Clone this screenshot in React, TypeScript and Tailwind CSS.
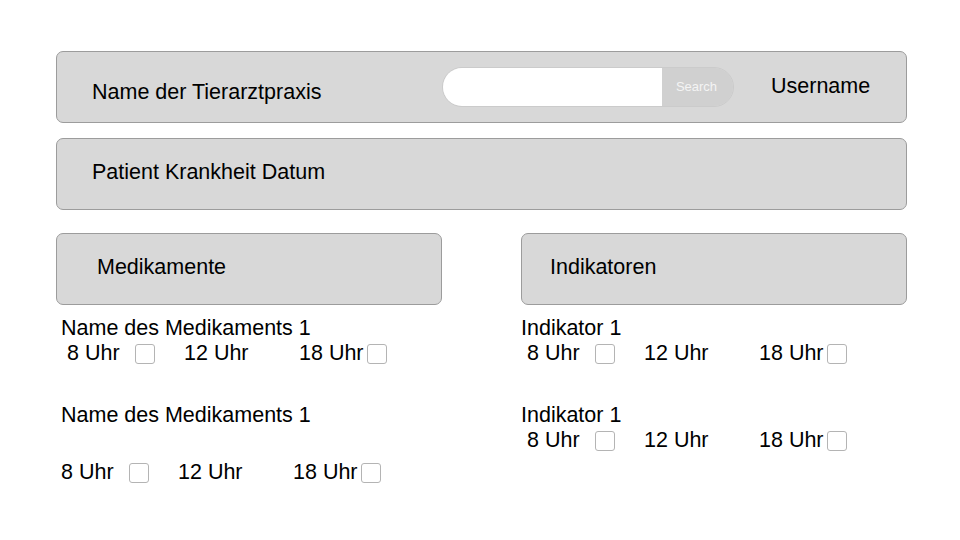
import React from "react";

const Box = () => (
  <span className="inline-block w-[20px] h-[20px] shrink-0 bg-white border border-[#b4b4b4] rounded-[3px]" />
);

const TimeRow = ({ pad }: { pad: boolean }) => (
  <div className={`flex items-center h-[25px] ${pad ? "pl-[6px]" : ""}`}>
    <span className="w-[68px] shrink-0">8 Uhr</span>
    <Box />
    <span className="ml-[29px] w-[115px] shrink-0">12 Uhr</span>
    <span className="w-[68px] shrink-0">18 Uhr</span>
    <Box />
  </div>
);

export default function App() {
  return (
    <div
      className="w-[960px] h-[540px] bg-white text-[21.5px] leading-[25px] text-black overflow-hidden"
      style={{ fontFamily: '"Liberation Sans", Arial, Helvetica, sans-serif' }}
    >
      <div className="ml-[56px] pt-[51px] w-[851px]">
        {/* Header bar */}
        <div className="h-[72px] bg-[#d8d8d8] border border-[#9c9c9c] rounded-[7px] flex items-start">
          <div className="w-[385px] pl-[35px] pt-[28px]">Name der Tierarztpraxis</div>
          <div className="mt-[15px] flex h-[40px] w-[292px] rounded-full overflow-hidden border border-[#cbcbcb]">
            <div className="w-[219px] bg-white" />
            <div className="flex-1 bg-[#d0d0d0] flex items-center justify-center text-[13px] leading-[16px] text-[#f4f4f4] pr-[2px]">
              Search
            </div>
          </div>
          <div className="ml-[37px] mt-[22px]">Username</div>
        </div>

        {/* Patient bar */}
        <div className="mt-[15px] h-[72px] bg-[#d8d8d8] border border-[#9c9c9c] rounded-[7px] pl-[35px] pt-[21px]">
          Patient Krankheit Datum
        </div>

        {/* Columns */}
        <div className="mt-[23px] flex gap-[79px]">
          <div className="w-[386px]">
            <div className="h-[72px] bg-[#d8d8d8] border border-[#9c9c9c] rounded-[7px] pl-[40px] pt-[21px]">
              Medikamente
            </div>
            <div className="mt-[11px] pl-[5px]">
              <div>Name des Medikaments 1</div>
              <TimeRow pad={true} />
              <div className="mt-[37px]">Name des Medikaments 1</div>
              <div className="mt-[32px]">
                <TimeRow pad={false} />
              </div>
            </div>
          </div>
          <div className="w-[386px]">
            <div className="h-[72px] bg-[#d8d8d8] border border-[#9c9c9c] rounded-[7px] pl-[28px] pt-[21px]">
              Indikatoren
            </div>
            <div className="mt-[11px]">
              <div>Indikator 1</div>
              <TimeRow pad={true} />
              <div className="mt-[37px]">Indikator 1</div>
              <TimeRow pad={true} />
            </div>
          </div>
        </div>
      </div>
    </div>
  );
}
